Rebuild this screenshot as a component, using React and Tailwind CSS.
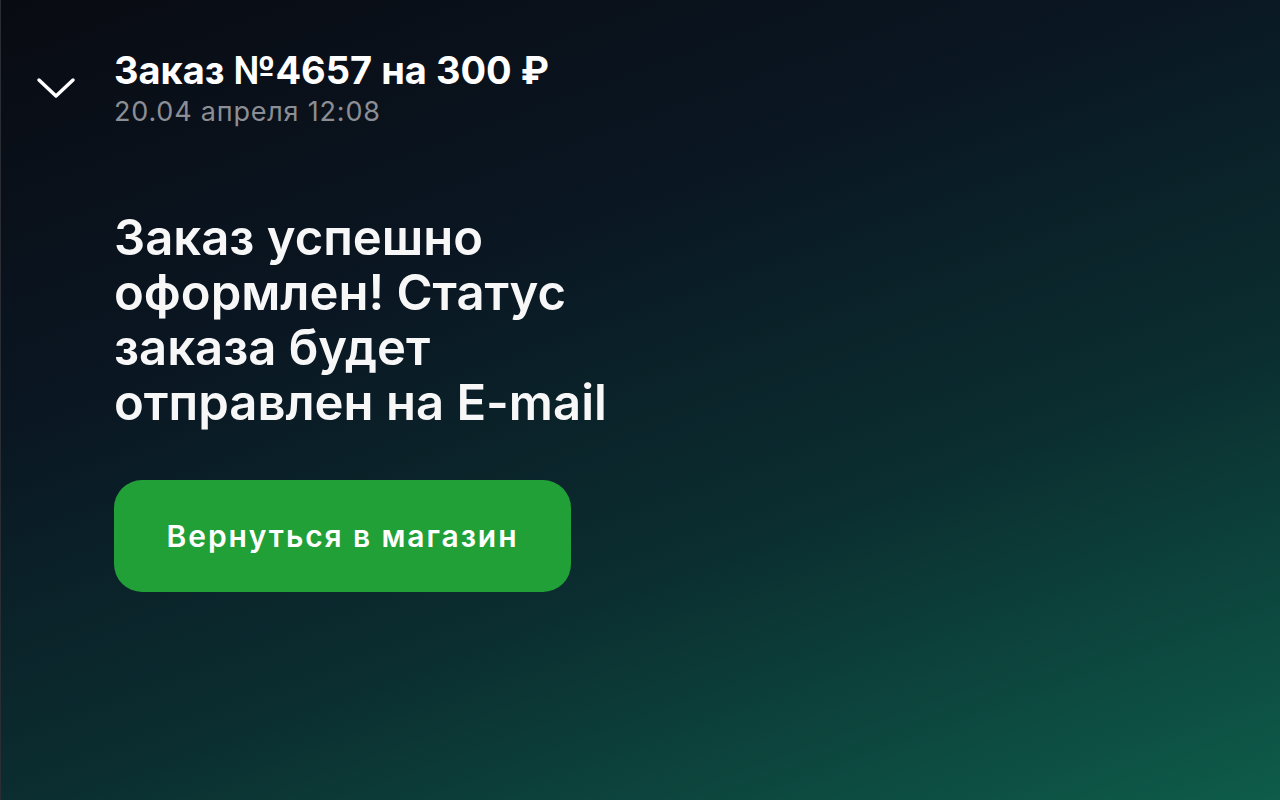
const ChevronDown = () => (
  <svg width="40" height="22" viewBox="0 0 40 22" fill="none">
    <path
      d="M3 3 L20 19 L37 3"
      stroke="white"
      strokeWidth="3.5"
      strokeLinecap="round"
      strokeLinejoin="round"
    />
  </svg>
);

const App = () => {
  return (
    <div
      className="min-h-screen w-full border-l border-[#2a2d33] bg-[linear-gradient(160deg,#090b12_0%,#0a1622_33%,#0b2e30_64%,#0e5c4a_100%)] text-white"
      style={{ fontFamily: "Inter, sans-serif" }}
    >
      {/* Order header */}
      <div className="flex items-start pt-[47px]">
        <button className="mt-[30px] flex w-[113px] justify-start pl-[35px]">
          <ChevronDown />
        </button>
        <div className="flex flex-col">
          <h2 className="text-[38px] font-bold leading-[46px]">
            Заказ №4657 на 300 ₽
          </h2>
          <span className="mt-[3px] text-[27px] leading-[32px] tracking-[0.8px] text-[#8b8e94]">
            20.04 апреля 12:08
          </span>
        </div>
      </div>

      {/* Status */}
      <div className="pl-[113px] pt-[82px]">
        <h1 className="w-[560px] text-[49px] font-semibold leading-[55px] text-[#f7f7f7]">
          Заказ успешно оформлен! Статус заказа будет отправлен на E-mail
        </h1>

        <button className="mt-[50px] flex h-[112px] w-[457px] items-center justify-center rounded-[28px] bg-[#21a038] text-[30px] font-semibold tracking-[1.9px] text-white">
          Вернуться в магазин
        </button>
      </div>
    </div>
  );
};

export default App;
